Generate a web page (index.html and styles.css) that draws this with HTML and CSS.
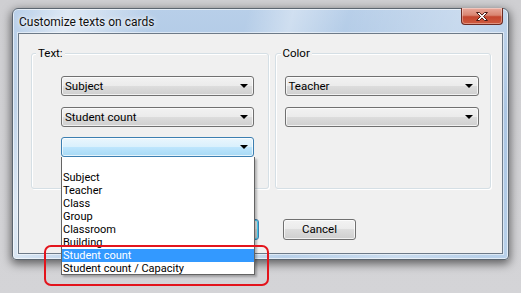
FILE: index.html
```html
<!DOCTYPE html>
<html>
<head>
<meta charset="utf-8">
<link rel="stylesheet" href="styles.css">
</head>
<body>
<div class="window">
  <div class="titlebar">
    <span class="title">Customize texts on cards</span>
    <div class="close">
      <svg width="14" height="11" viewBox="0 0 14 11"><path d="M1.5 1.5h3l2.5 2.6 2.5-2.6h3l-4 4 4 4h-3L7 6.9 4.5 9.5h-3l4-4z" fill="#fff" stroke="#4a1c16" stroke-width="1" stroke-linejoin="round"/></svg>
    </div>
  </div>
  <div class="client">
    <div class="groups">
      <div class="group group-text">
        <div class="legend">Text:</div>
        <div class="combo-list">
          <div class="combo"><span>Subject</span><i class="arrow"></i></div>
          <div class="combo"><span>Student count</span><i class="arrow"></i></div>
          <div class="combo combo-focus"><span></span><i class="arrow"></i></div>
        </div>
      </div>
      <div class="group group-color">
        <div class="legend">Color</div>
        <div class="combo-list">
          <div class="combo"><span>Teacher</span><i class="arrow"></i></div>
          <div class="combo"><span></span><i class="arrow"></i></div>
        </div>
      </div>
    </div>
    <div class="buttons">
      <div class="btn btn-default">OK</div>
      <div class="btn">Cancel</div>
    </div>
  </div>
</div>
<div class="dropdown">
  <div class="item item-blank"></div>
  <div class="item">Subject</div>
  <div class="item">Teacher</div>
  <div class="item">Class</div>
  <div class="item">Group</div>
  <div class="item">Classroom</div>
  <div class="item item-clipped">Building</div>
  <div class="item selected">Student count</div>
  <div class="item">Student count / Capacity</div>
</div>
<div class="annotation"></div>
</body>
</html>
```

FILE: styles.css
```css
html, body {
  margin: 0;
  padding: 0;
}
body {
  width: 521px;
  height: 293px;
  overflow: hidden;
  background: linear-gradient(to bottom, #cfcfd2 0%, #d4d4d7 100%);
  font-family: Roboto, "Noto Sans", sans-serif;
  font-size: 11.5px;
  color: #000;
  position: relative;
  padding-top: 8px;
  box-sizing: border-box;
}
.window {
  margin-left: 12px;
  width: 497px;
  height: 252px;
  border-radius: 6px 6px 4px 4px;
  border: 1px solid #5c6670;
  box-sizing: border-box;
  background:
    linear-gradient(105deg, rgba(255,255,255,0) 0%, rgba(255,255,255,0.55) 10%, rgba(255,255,255,0) 25%, rgba(255,255,255,0) 42%, rgba(255,255,255,0.35) 50%, rgba(255,255,255,0) 60%, rgba(255,255,255,0.25) 80%, rgba(255,255,255,0) 95%),
    linear-gradient(to bottom, #b8cfe9, #a9c4e2 40%, #b9d1ea);
  box-shadow: 0 3px 10px 1px rgba(0,0,0,0.55), inset 0 0 0 1px rgba(255,255,255,0.6);
  display: flex;
  flex-direction: column;
  padding: 0 5px 5px 5px;
}
.titlebar {
  height: 24px;
  display: flex;
  align-items: flex-start;
  justify-content: space-between;
  flex: none;
}
.title {
  font-size: 12px;
  margin-top: 6px;
  margin-left: 1px;
  color: #101010;
  text-shadow: 0 0 6px rgba(255,255,255,0.95), 0 0 3px rgba(255,255,255,0.9);
}
.close {
  width: 42px;
  height: 17px;
  margin-top: -1px;
  box-sizing: border-box;
  border: 1px solid #6b2a22;
  border-top: none;
  border-radius: 0 0 4px 4px;
  background: linear-gradient(to bottom, #e9a99c 0%, #d98571 45%, #c4462f 55%, #cf5a3e 100%);
  box-shadow: inset 0 0 0 1px rgba(255,255,255,0.35);
  display: flex;
  align-items: center;
  justify-content: center;
}
.client {
  flex: 1;
  background: #f0f0f0;
  border: 1px solid #6d7a88;
  box-shadow: 0 0 0 1px rgba(255,255,255,0.5);
  padding: 19px 11px 0 12px;
  display: flex;
  flex-direction: column;
}
.groups {
  display: flex;
  gap: 6px;
}
.group {
  border: 1px solid #d5dfe5;
  border-radius: 3px;
  box-shadow: inset 1px 1px 0 #fff, 1px 1px 0 #fff;
  height: 136px;
  box-sizing: border-box;
}
.group-text {
  width: 238px;
  padding: 0 14px 0 29px;
}
.group-color {
  width: 217px;
  padding: 0 11px 0 9px;
}
.legend {
  display: inline-block;
  margin-top: -8px;
  margin-left: -25px;
  padding: 0 2px;
  background: #f0f0f0;
  line-height: 14px;
  height: 14px;
  vertical-align: top;
}
.group-color .legend {
  margin-left: -4px;
}
.combo-list {
  display: flex;
  flex-direction: column;
  gap: 11px;
  margin-top: 8px;
}
.combo {
  height: 20px;
  box-sizing: border-box;
  border: 1px solid #707070;
  border-radius: 3px;
  background: linear-gradient(to bottom, #f2f2f2 0%, #ebebeb 50%, #dddddd 50%, #cfcfcf 100%);
  box-shadow: inset 0 0 0 1px rgba(255,255,255,0.7);
  display: flex;
  align-items: center;
  justify-content: space-between;
  padding: 0 5px 0 3px;
  line-height: 18px;
}
.combo-focus {
  margin-top: -1px;
  border-color: #3c7fb1;
  background: linear-gradient(to bottom, #eaf6fd 0%, #d9f0fc 50%, #bee6fd 50%, #a7d9f5 100%);
}
.arrow {
  width: 0;
  height: 0;
  border-left: 4px solid transparent;
  border-right: 4px solid transparent;
  border-top: 4px solid #000;
}
.buttons {
  display: flex;
  gap: 24px;
  padding-left: 155px;
  margin-top: 30px;
}
.btn {
  width: 73px;
  height: 21px;
  box-sizing: border-box;
  border: 1px solid #707070;
  border-radius: 3px;
  background: linear-gradient(to bottom, #f2f2f2 0%, #ebebeb 50%, #dddddd 50%, #cfcfcf 100%);
  box-shadow: inset 0 0 0 1px rgba(255,255,255,0.7);
  text-align: center;
  line-height: 19px;
}
.btn-default {
  border-color: #3c7fb1;
  box-shadow: inset 0 0 0 1px #48d8fb;
}
.dropdown {
  position: absolute;
  left: 61px;
  top: 157px;
  width: 194px;
  height: 118px;
  box-sizing: border-box;
  background: #fff;
  border: 1px solid #646464;
  border-top: none;
  box-shadow: 2px 2px 2px rgba(0,0,0,0.25);
  font-size: 11px;
}
.item {
  height: 13px;
  line-height: 13px;
  padding-left: 1px;
  white-space: nowrap;
}
.item-blank {
  height: 14px;
}
.item-clipped {
  overflow: hidden;
}
.item.selected {
  background: #3399ff;
  color: #fff;
}
.annotation {
  position: absolute;
  left: 44px;
  top: 245px;
  width: 225px;
  height: 41px;
  box-sizing: border-box;
  border: 2px solid #e3141c;
  border-radius: 7px;
}
```
